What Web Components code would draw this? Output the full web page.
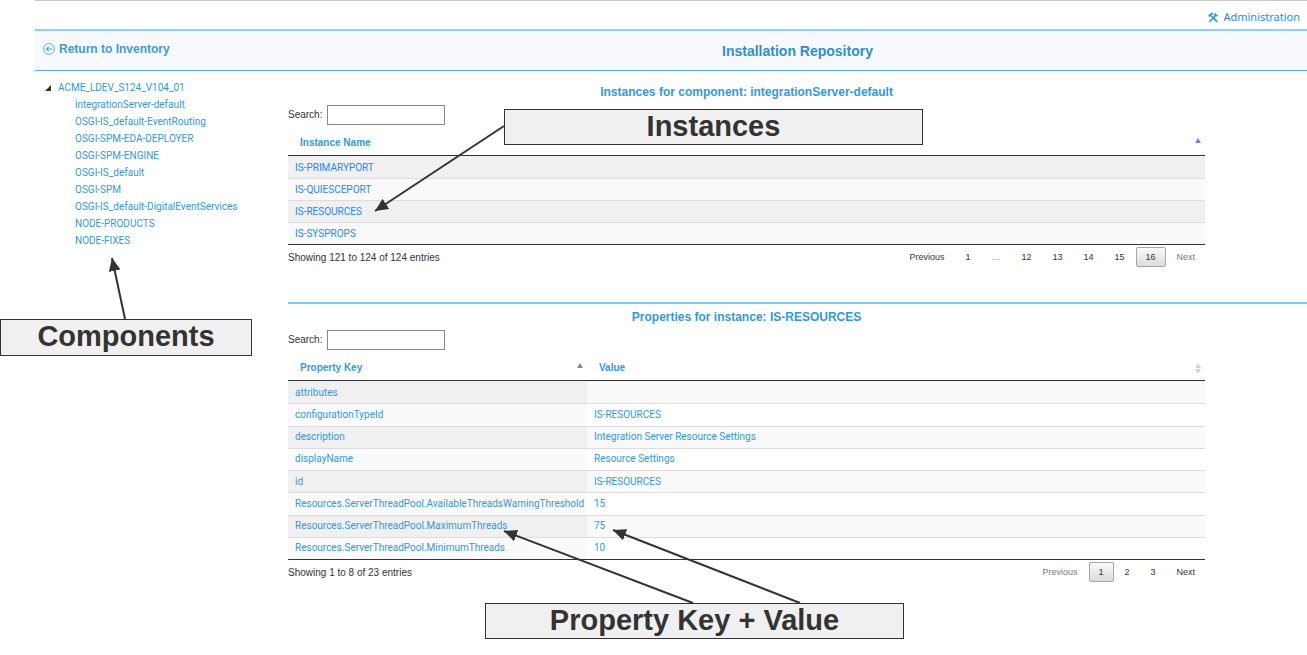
<!DOCTYPE html>
<html lang="en">
<head>
<meta charset="utf-8">
<title>Installation Repository</title>
<style>
  body { margin: 0; background: #fff; font-family: "Liberation Sans", Arial, sans-serif; font-size: 10px; color: #333; }
</style>
</head>
<body>
<repo-app></repo-app>

<template id="top-bar">
  <style>
    :host { display: flex; justify-content: flex-end; align-items: center; height: 29px; padding: 4px 7px 0 0; box-sizing: border-box; border-top: 1px solid #c8c8c8; }
    a { display: flex; align-items: center; gap: 4px; color: #1e88fb; text-decoration: none; font: 11px/16px "Noto Sans", sans-serif; }
    svg { display: block; }
  </style>
  <a href="#admin">
    <svg width="11" height="11" viewBox="0 0 11 11" fill="none" stroke="#3498db" aria-hidden="true">
      <path d="M3.6 4.2 9.2 9.9" stroke-width="1.7"/>
      <path d="M.8 4.3 4.6 1.1" stroke-width="2.3"/>
      <path d="M1.3 10 7.2 4" stroke-width="1.7"/>
      <path d="M7.4 1 6.9 3.6 9.9 3.4" stroke-width="1.5"/>
    </svg>
    <span>Administration</span>
  </a>
</template>

<template id="page-header">
  <style>
    :host { display: grid; grid-template-columns: 253px 1fr; align-items: center; height: 42px; box-sizing: border-box; background: #f7f9ff; border-top: 2px solid #92cbf3; border-bottom: 1px solid #5aade4; }
    a { display: flex; align-items: center; gap: 4px; padding: 0 0 3px 8px; color: #3c9bdd; font-weight: bold; font-size: 12px; line-height: 16px; text-decoration: none; }
    h1 { margin: 0; text-align: center; font-size: 14px; line-height: 20px; color: #2f8fcb; }
  </style>
  <a href="#inventory">
    <svg width="12" height="12" viewBox="0 0 12 12" fill="none" stroke="#4ea5e2" aria-hidden="true">
      <circle cx="6" cy="6" r="5.4" stroke-width=".9"/>
      <path d="M9 6H3.5M5.8 3.6 3.4 6l2.4 2.4" stroke-width="1.1"/>
    </svg>
    <span>Return to Inventory</span>
  </a>
  <h1><slot></slot></h1>
</template>

<template id="component-tree">
  <style>
    :host { display: block; padding: 8px 0 0 10px; font: 10px/17px Roboto, sans-serif; }
    .root { display: flex; align-items: center; gap: 7px; }
    ul { list-style: none; margin: 0; padding: 0 0 0 30px; }
    a { color: #3498db; text-decoration: none; }
    svg { display: block; }
  </style>
  <div class="root">
    <svg width="6" height="6" viewBox="0 0 6 6" aria-hidden="true"><path d="M6 0v6H0z" fill="#333"/></svg>
    <a href="#root"></a>
  </div>
  <ul></ul>
</template>

<template id="page-nav">
  <style>
    :host { display: block; }
    nav { display: flex; align-items: center; gap: 1px; }
    button, span { box-sizing: border-box; height: 20px; padding: 0 9px; border: 1px solid transparent; border-radius: 2px; background: none; font: 9px/18px "Liberation Sans", Arial, sans-serif; color: #333; }
    button:disabled, span { color: #777; }
    button[aria-current] { border-color: #a5a5a5; background: linear-gradient(#fafafa, #dcdcdc); }
  </style>
  <nav aria-label="Pages"></nav>
</template>

<template id="data-panel">
  <style>
    :host { display: block; }
    .inner { width: 90%; }
    h2 { margin: 0 0 4px; text-align: center; font-size: 12px; line-height: 18px; color: #3498db; }
    label { display: flex; align-items: center; gap: 5px; line-height: 12px; }
    input { box-sizing: border-box; width: 118px; height: 20px; margin: 0; padding: 0 4px; border: 1px solid #888; border-radius: 0; background: #fff; font: inherit; }
    footer { display: flex; justify-content: space-between; align-items: flex-start; padding-top: 2px; line-height: 22px; }
  </style>
  <div class="inner">
    <h2><slot name="title"></slot></h2>
    <label>Search: <input type="text"></label>
    <slot></slot>
    <footer><slot name="info"></slot><slot name="pages"></slot></footer>
  </div>
</template>

<template id="call-out">
  <style>
    :host { position: absolute; box-sizing: border-box; display: flex; align-items: flex-start; justify-content: center; border: 1px solid #333; background: #f0f0f0; font-weight: bold; font-size: 29px; line-height: 32px; color: #333; }
  </style>
  <slot></slot>
</template>

<template id="call-arrows">
  <style>
    :host { position: absolute; left: 0; top: 0; pointer-events: none; }
    svg { display: block; }
  </style>
  <svg width="920" height="640" viewBox="0 0 920 640" fill="none" stroke="#333" stroke-width="2" aria-hidden="true">
    <defs>
      <marker id="head" markerUnits="userSpaceOnUse" markerWidth="14" markerHeight="12" refX="13" refY="6" orient="auto">
        <path d="M0 0 13 6 0 12z" fill="#333" stroke="none"/>
      </marker>
    </defs>
    <path d="M504 126 375 211" marker-end="url(#head)"/>
    <path d="M125 319 112 258" marker-end="url(#head)"/>
    <path d="M693 603 504 531" marker-end="url(#head)"/>
    <path d="M800 603 613 530" marker-end="url(#head)"/>
  </svg>
</template>

<template id="repo-app">
  <style>
    :host { display: block; position: relative; }
    .page { margin-left: 35px; }
    .body { display: grid; grid-template-columns: 253px 1fr; }
    .instances { padding-top: 12px; min-height: 231px; box-sizing: border-box; }
    .properties { padding: 4px 0 60px; border-top: 2px solid #86c4f0; }
    table { width: 100%; border-collapse: separate; border-spacing: 0; border-bottom: 1px solid #333; table-layout: fixed; }
    .instances table { height: 120px; }
    .properties table { height: 210px; }
    .key { width: 299px; }
    th { height: 31px; box-sizing: border-box; padding: 6px 4px 0 12px; border-bottom: 1px solid #333; text-align: left; font-size: 10px; line-height: 16px; color: #3498db; }
    .head { display: flex; justify-content: space-between; align-items: center; }
    .head svg { display: block; margin-bottom: 6px; }
    .head svg.both { margin: 0; }
    td { padding: 0 7px; border-top: 1px solid #ddd; font: 10px/20px Roboto, sans-serif; color: #3498db; white-space: nowrap; }
    tbody tr:first-child td { border-top-color: #f0f0f0; }
    td a { color: #1e88fb; text-decoration: none; }
    tr:nth-child(odd) td { background: #f9f9f9; }
    tr:nth-child(odd) td:first-child { background: #f0f0f0; }
    tr:nth-child(even) td:first-child { background: #fafafa; }
    call-out.components { left: 0; top: 319px; width: 252px; height: 37px; }
    call-out.inst { left: 504px; top: 109px; width: 419px; height: 36px; }
    call-out.prop { left: 485px; top: 603px; width: 419px; height: 36px; }
  </style>
  <div class="page">
    <top-bar></top-bar>
    <page-header>Installation Repository</page-header>
    <div class="body">
      <component-tree></component-tree>
      <main>
        <data-panel class="instances">
          <span slot="title">Instances for component: integrationServer-default</span>
          <table>
            <thead><tr><th scope="col"><div class="head">Instance Name
              <svg width="6" height="5" viewBox="0 0 6 5" aria-hidden="true"><path d="M3 0 6 5H0z" fill="#7f7fe0"/></svg></div></th></tr></thead>
            <tbody>
              <tr><td><a href="#i1">IS-PRIMARYPORT</a></td></tr>
              <tr><td><a href="#i2">IS-QUIESCEPORT</a></td></tr>
              <tr><td><a href="#i3">IS-RESOURCES</a></td></tr>
              <tr><td><a href="#i4">IS-SYSPROPS</a></td></tr>
            </tbody>
          </table>
          <span slot="info">Showing 121 to 124 of 124 entries</span>
          <page-nav slot="pages" pages="1 … 12 13 14 15 16" current="16" end="Next"></page-nav>
        </data-panel>
        <data-panel class="properties">
          <span slot="title">Properties for instance: IS-RESOURCES</span>
          <table>
            <colgroup><col class="key"><col></colgroup>
            <thead><tr>
              <th scope="col"><div class="head">Property Key
                <svg width="6" height="5" viewBox="0 0 6 5" aria-hidden="true"><path d="M3 0 6 5H0z" fill="#7f7fe0"/></svg></div></th>
              <th scope="col"><div class="head">Value
                <svg class="both" width="6" height="11" viewBox="0 0 6 11" aria-hidden="true"><path d="M3 0 6 5H0zM3 11 6 6H0z" fill="#d4d4d4"/></svg></div></th>
            </tr></thead>
            <tbody>
              <tr><td>attributes</td><td></td></tr>
              <tr><td>configurationTypeId</td><td>IS-RESOURCES</td></tr>
              <tr><td>description</td><td>Integration Server Resource Settings</td></tr>
              <tr><td>displayName</td><td>Resource Settings</td></tr>
              <tr><td>id</td><td>IS-RESOURCES</td></tr>
              <tr><td>Resources.ServerThreadPool.AvailableThreadsWarningThreshold</td><td>15</td></tr>
              <tr><td>Resources.ServerThreadPool.MaximumThreads</td><td>75</td></tr>
              <tr><td>Resources.ServerThreadPool.MinimumThreads</td><td>10</td></tr>
            </tbody>
          </table>
          <span slot="info">Showing 1 to 8 of 23 entries</span>
          <page-nav slot="pages" pages="1 2 3" current="1" end="Previous"></page-nav>
        </data-panel>
      </main>
    </div>
  </div>
  <call-arrows></call-arrows>
  <call-out class="components">Components</call-out>
  <call-out class="inst">Instances</call-out>
  <call-out class="prop">Property Key + Value</call-out>
</template>

<script>
  class TemplateElement extends HTMLElement {
    constructor() {
      super();
      const template = document.getElementById(this.localName);
      this.attachShadow({ mode: "open" }).append(template.content.cloneNode(true));
    }
  }

  class TopBar extends TemplateElement {}
  class PageHeader extends TemplateElement {}
  class DataPanel extends TemplateElement {}
  class CallOut extends TemplateElement {}
  class CallArrows extends TemplateElement {}
  class RepoApp extends TemplateElement {}

  class ComponentTree extends TemplateElement {
    connectedCallback() {
      this.shadowRoot.querySelector(".root a").textContent = "ACME_LDEV_S124_V104_01";
      const names = ["integrationServer-default", "OSGI-IS_default-EventRouting", "OSGI-SPM-EDA-DEPLOYER",
        "OSGI-SPM-ENGINE", "OSGI-IS_default", "OSGI-SPM", "OSGI-IS_default-DigitalEventServices",
        "NODE-PRODUCTS", "NODE-FIXES"];
      this.shadowRoot.querySelector("ul").replaceChildren(...names.map(name => {
        const item = document.createElement("li");
        const link = document.createElement("a");
        link.href = "#" + name;
        link.textContent = name;
        item.append(link);
        return item;
      }));
    }
  }

  /* "end" names the step button that cannot be used on the current page. */
  class PageNav extends TemplateElement {
    connectedCallback() {
      const labels = ["Previous", ...this.getAttribute("pages").split(" "), "Next"];
      this.shadowRoot.querySelector("nav").replaceChildren(...labels.map(label => {
        const item = document.createElement(label === "…" ? "span" : "button");
        item.textContent = label;
        if (label === this.getAttribute("end")) item.disabled = true;
        if (label === this.getAttribute("current")) item.setAttribute("aria-current", "page");
        return item;
      }));
    }
  }

  customElements.define("top-bar", TopBar);
  customElements.define("page-header", PageHeader);
  customElements.define("component-tree", ComponentTree);
  customElements.define("page-nav", PageNav);
  customElements.define("data-panel", DataPanel);
  customElements.define("call-out", CallOut);
  customElements.define("call-arrows", CallArrows);
  customElements.define("repo-app", RepoApp);
</script>
</body>
</html>
